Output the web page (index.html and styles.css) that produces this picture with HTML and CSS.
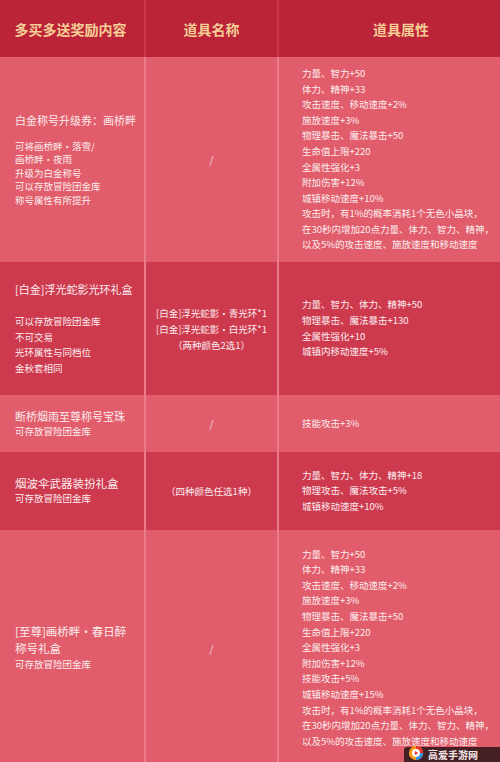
FILE: index.html
```html
<!DOCTYPE html>
<html lang="zh-CN">
<head>
<meta charset="utf-8">
<title>多买多送奖励内容</title>
<link rel="stylesheet" href="styles.css">
</head>
<body>
<div class="table">
  <div class="row head">
    <div class="cell c1">多买多送奖励内容</div>
    <div class="cell c2">道具名称</div>
    <div class="cell c3">道具属性</div>
  </div>

  <div class="row light r1">
    <div class="cell c1">
      <div class="title t1">白金称号升级券：画桥畔</div>
      <div class="sub tight">可将画桥畔・落雪/<br>画桥畔・夜雨<br>升级为白金称号<br>可以存放冒险团金库<br>称号属性有所提升</div>
    </div>
    <div class="cell c2"><span class="slash">/</span></div>
    <div class="cell c3 attrs">
      力量、智力+50<br>体力、精神+33<br>攻击速度、移动速度+2%<br>施放速度+3%<br>物理暴击、魔法暴击+50<br>生命值上限+220<br>全属性强化+3<br>附加伤害+12%<br>城镇移动速度+10%<br>攻击时，有1%的概率消耗1个无色小晶块，<br>在30秒内增加20点力量、体力、智力、精神，<br>以及5%的攻击速度、施放速度和移动速度
    </div>
  </div>

  <div class="row dark r2">
    <div class="cell c1">
      <div class="title t2">[白金]浮光蛇影光环礼盒</div>
      <div class="sub">可以存放冒险团金库<br>不可交易<br>光环属性与同档位<br>金秋套相同</div>
    </div>
    <div class="cell c2 names">[白金]浮光蛇影・青光环*1<br>[白金]浮光蛇影・白光环*1<br>（两种颜色2选1）</div>
    <div class="cell c3 attrs">力量、智力、体力、精神+50<br>物理暴击、魔法暴击+130<br>全属性强化+10<br>城镇内移动速度+5%</div>
  </div>

  <div class="row light r3">
    <div class="cell c1">
      <div class="title">断桥烟雨至尊称号宝珠</div>
      <div class="sub">可存放冒险团金库</div>
    </div>
    <div class="cell c2"><span class="slash">/</span></div>
    <div class="cell c3 attrs">技能攻击+3%</div>
  </div>

  <div class="row dark r4">
    <div class="cell c1">
      <div class="title big">烟波伞武器装扮礼盒</div>
      <div class="sub">可存放冒险团金库</div>
    </div>
    <div class="cell c2 names">（四种颜色任选1种）</div>
    <div class="cell c3 attrs">力量、智力、体力、精神+18<br>物理攻击、魔法攻击+5%<br>城镇移动速度+10%</div>
  </div>

  <div class="row light r5">
    <div class="cell c1">
      <div class="title two">[至尊]画桥畔・春日醉<br>称号礼盒</div>
      <div class="sub">可存放冒险团金库</div>
    </div>
    <div class="cell c2"><span class="slash">/</span></div>
    <div class="cell c3 attrs">
      力量、智力+50<br>体力、精神+33<br>攻击速度、移动速度+2%<br>施放速度+3%<br>物理暴击、魔法暴击+50<br>生命值上限+220<br>全属性强化+3<br>附加伤害+12%<br>技能攻击+5%<br>城镇移动速度+15%<br>攻击时，有1%的概率消耗1个无色小晶块，<br>在30秒内增加20点力量、体力、智力、精神，<br>以及5%的攻击速度、施放速度和移动速度
    </div>
  </div>
</div>

<div class="mark">
  <svg class="mark-logo" width="16" height="16" viewBox="0 0 20 20">
    <circle cx="10" cy="10" r="9" fill="#f39a1e"/>
    <path d="M10 1 A9 9 0 0 1 19 10 L14 10 A4 4 0 0 0 10 6 Z" fill="#e8342c"/>
    <path d="M19 10 A9 9 0 0 1 10 19 L10 14 A4 4 0 0 0 14 10 Z" fill="#2f8fe0"/>
    <circle cx="10" cy="10" r="5" fill="#fff"/>
    <path d="M8.5 7.5 L13 10 L8.5 12.5 Z" fill="#e8342c"/>
  </svg>
  <span class="mark-text">高爱手游网</span>
</div>
</body>
</html>
```

FILE: styles.css
```css
html, body {
  margin: 0;
  padding: 0;
}
body {
  width: 500px;
  height: 762px;
  overflow: hidden;
  position: relative;
  background: #e15d6b;
  font-family: "Noto Sans CJK SC", "Noto Sans", sans-serif;
  color: #fcecee;
}
.table {
  display: flex;
  flex-direction: column;
}
.row {
  display: grid;
  grid-template-columns: 146px 133px 221px;
}
.cell {
  display: flex;
  flex-direction: column;
  justify-content: center;
  box-sizing: border-box;
}
.c1, .c2 {
  border-right: 2px solid #ea7b87;
}
.head {
  height: 57px;
  background: #bb2339;
}
.head .cell {
  align-items: center;
  font-size: 14px;
  font-weight: bold;
  color: #f6cf96;
  border-color: #c8374b;
}
.head .c1 {
  padding-left: 0;
  padding-right: 3px;
}
.light { background: #e15d6b; }
.dark { background: #cd3a4e; }
.r1 { height: 205px; }
.r2 { height: 133px; }
.r3 { height: 57px; }
.r4 { height: 78px; }
.r5 { height: 236px; }

.c1 { padding-left: 15px; }
.c2 { align-items: center; text-align: center; }
.c3 { padding-left: 23px; }

.title {
  font-size: 11px;
  line-height: 16px;
  white-space: nowrap;
}
.title.big { font-size: 11.5px; }
.t1 { margin-bottom: 12px; }
.t2 { margin-bottom: 17px; }
.title.two { line-height: 17px; font-size: 11.5px; }
.sub {
  font-size: 9.5px;
  line-height: 15.5px;
  white-space: nowrap;
}
.sub.tight { line-height: 13.5px; }
.attrs {
  font-size: 9.5px;
  line-height: 15.6px;
  white-space: nowrap;
}
.names {
  font-size: 9.5px;
  line-height: 16px;
  white-space: nowrap;
}
.slash {
  font-size: 10px;
  color: #f7dde0;
}
.mark {
  position: absolute;
  right: 0;
  bottom: 0;
  width: 96px;
  height: 15px;
  background: rgba(40, 20, 22, 0.85);
  display: flex;
  align-items: center;
  gap: 4px;
  padding-left: 4px;
  box-sizing: border-box;
  border-top-left-radius: 3px;
}
.mark-logo { flex: none; margin-top: -4px; }
.mark-text {
  font-size: 10px;
  line-height: 12px;
  font-weight: bold;
  color: #f2e6e6;
  white-space: nowrap;
}
```
